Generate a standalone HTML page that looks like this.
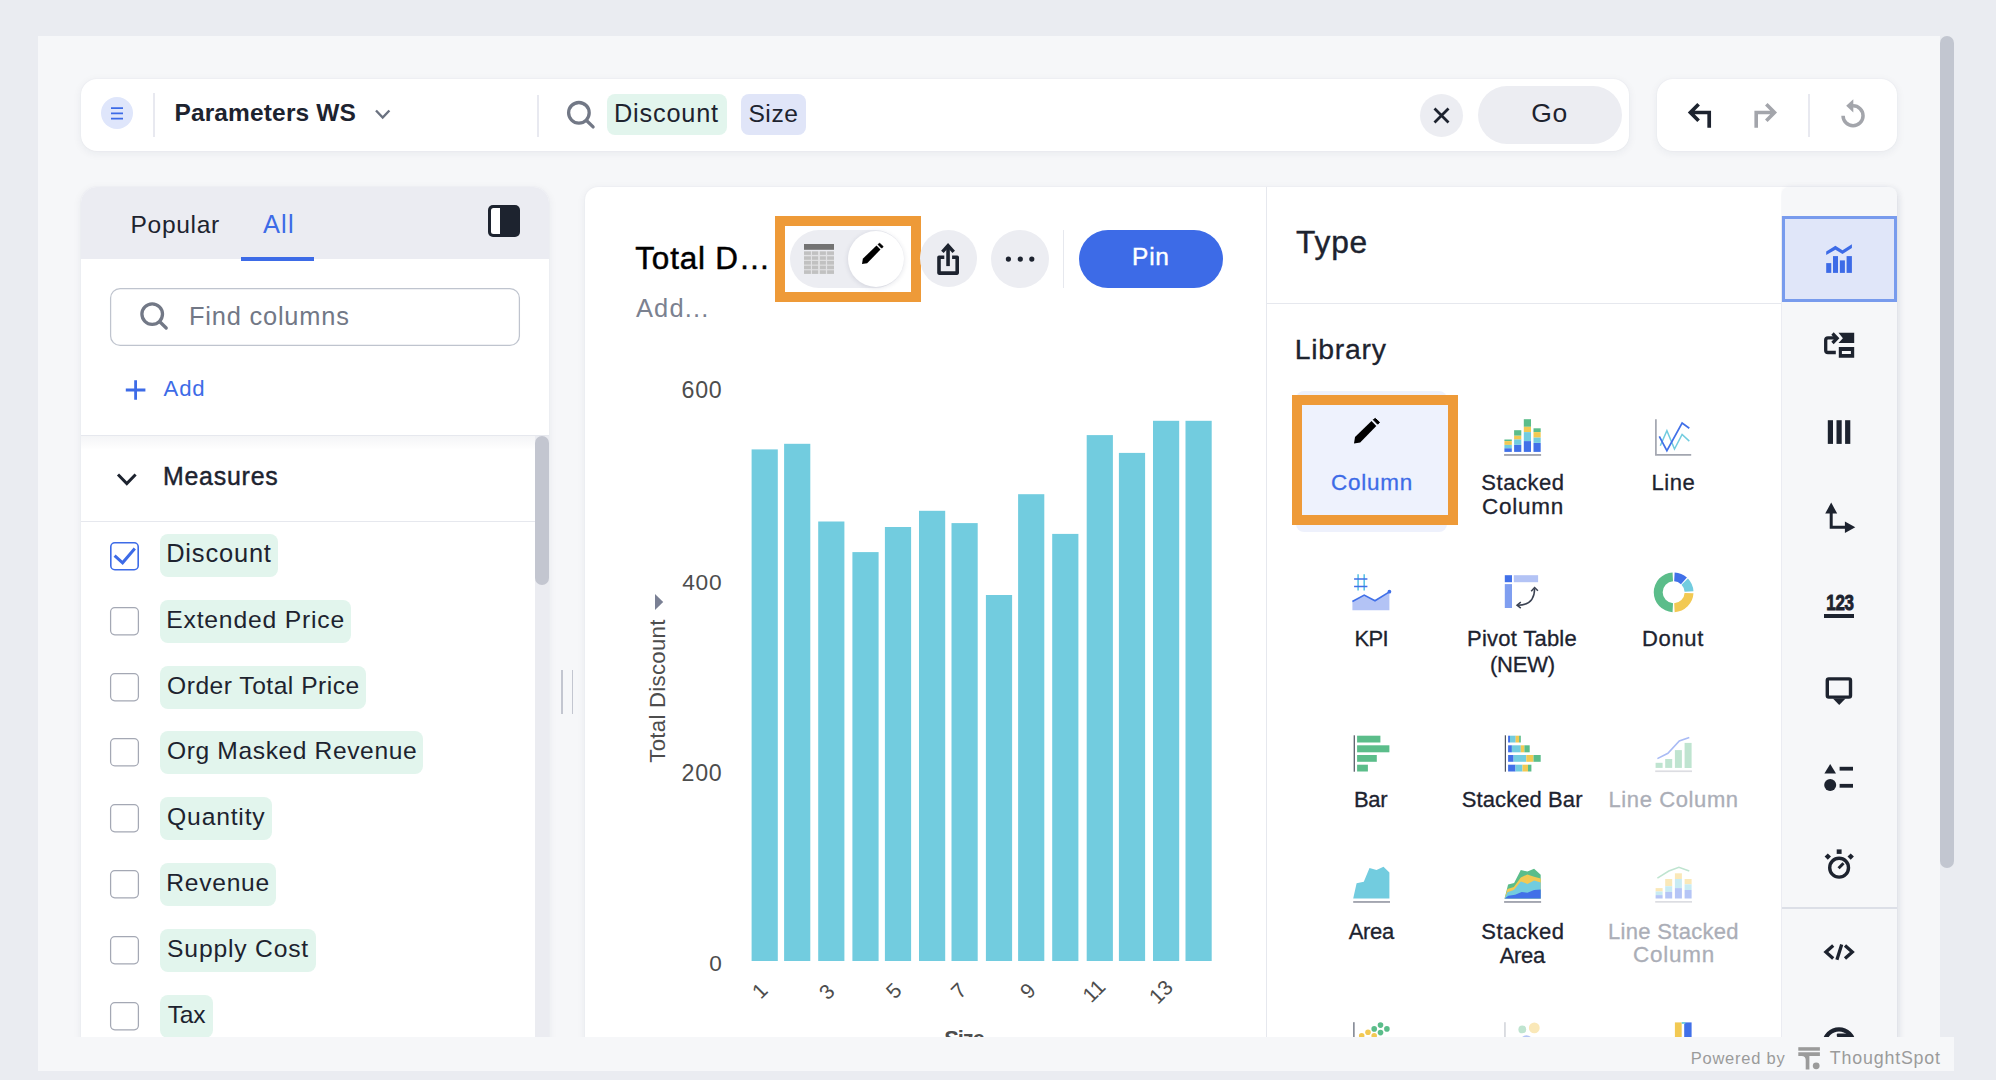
<!DOCTYPE html>
<html><head><meta charset="utf-8"><title>ThoughtSpot</title>
<style>
html,body{margin:0;padding:0}
html{width:2002px;height:1080px;overflow:hidden}
body{width:2002px;height:1080px;overflow:hidden;background:#eaecf1;position:relative;font-family:"Liberation Sans", sans-serif}
.b{position:absolute;box-sizing:border-box;display:block}
.t{position:absolute;white-space:nowrap;font-family:"Liberation Sans", sans-serif}
</style></head><body>
<div class="b" style="left:38px;top:36px;width:1902px;height:1035px;background:#f6f7f9;border-radius:0px;"></div>
<div class="b" style="left:1940px;top:36px;width:14px;height:832px;background:#c2c6d0;border-radius:7px;"></div>
<div class="b" style="left:81px;top:79px;width:1548px;height:72px;background:#fff;border-radius:16px;box-shadow:0 2px 10px rgba(30,40,80,.065),0 0 2px rgba(30,40,80,.05);"></div>
<div class="b" style="left:101px;top:97.4px;width:32px;height:32px;background:#dfe6fb;border-radius:16px;"></div>
<svg class="b" style="left:101px;top:97px;" width="32" height="32" viewBox="101 97 32 32"><path d="M111 108.2h12M111 113.4h12M111 118.6h12" stroke="#3d6be7" stroke-width="1.8" fill="none"/></svg>
<div class="b" style="left:153.3px;top:93px;width:1.8px;height:44px;background:#e8e9f0;border-radius:0px;"></div>
<div class="t" style="left:174.41px;top:101.01px;font-size:24.5px;line-height:24.5px;color:#1d232f;font-weight:700;letter-spacing:0.145px;">Parameters WS</div>
<svg class="b" style="left:370px;top:105px;" width="26" height="20" viewBox="370 105 26 20"><path d="M376 110.5l6.7 7 6.7-7" stroke="#6b7280" stroke-width="2.4" fill="none"/></svg>
<div class="b" style="left:536.8px;top:95px;width:1.8px;height:42px;background:#e8e9f0;border-radius:0px;"></div>
<svg class="b" style="left:560px;top:95px;" width="40" height="40" viewBox="560 95 40 40"><circle cx="578.9" cy="112.8" r="10.3" stroke="#727886" stroke-width="3.3" fill="none"/><path d="M586.5 120.5l6.6 6.4" stroke="#727886" stroke-width="3.3" stroke-linecap="round"/></svg>
<div class="b" style="left:607px;top:94px;width:120px;height:40.5px;background:#e2f5ed;border-radius:8px;"></div>
<div class="t" style="left:613.97px;top:101.07px;font-size:25.32px;line-height:25.32px;color:#1d232f;font-weight:400;letter-spacing:0.798px;">Discount</div>
<div class="b" style="left:741px;top:94px;width:65px;height:40.5px;background:#e0e5f8;border-radius:8px;"></div>
<div class="t" style="left:748.39px;top:101.68px;font-size:24.6px;line-height:24.6px;color:#1d232f;font-weight:400;letter-spacing:0.588px;">Size</div>
<div class="b" style="left:1420px;top:94px;width:43px;height:43px;background:#ecedf2;border-radius:22px;"></div>
<svg class="b" style="left:1425px;top:100px;" width="34" height="32" viewBox="1425 100 34 32"><path d="M1434.5 108.5l14 14M1448.5 108.5l-14 14" stroke="#1d232f" stroke-width="2.8" fill="none"/></svg>
<div class="b" style="left:1478px;top:86px;width:144px;height:58px;background:#ecedf2;border-radius:29px;"></div>
<div class="t" style="left:1531.18px;top:100.19px;font-size:26.47px;line-height:26.47px;color:#1d232f;font-weight:400;letter-spacing:0.802px;">Go</div>
<div class="b" style="left:1657px;top:79px;width:240px;height:72px;background:#fff;border-radius:16px;box-shadow:0 2px 10px rgba(30,40,80,.065),0 0 2px rgba(30,40,80,.05);"></div>
<svg class="b" style="left:1680px;top:98px;" width="40" height="36" viewBox="1680 98 40 36"><path d="M1698.6 104.2L1690.4 112.5L1698.6 120.8M1690.4 112.5H1709.2V127.7" stroke="#1d232f" stroke-width="3.7" fill="none"/></svg>
<svg class="b" style="left:1748px;top:98px;" width="40" height="36" viewBox="1748 98 40 36"><path d="M1766.3 104.2L1774.5 112.5L1766.3 120.8M1774.5 112.5H1756.2V127.7" stroke="#a3a5ab" stroke-width="3.6" fill="none"/></svg>
<div class="b" style="left:1808.2px;top:94px;width:1.7px;height:43px;background:#e8e9f0;border-radius:0px;"></div>
<svg class="b" style="left:1836px;top:94px;" width="36" height="38" viewBox="1836 94 36 38"><path d="M1853.05 105.75A10 10 0 1 1 1843.05 115.75" stroke="#a3a5ab" stroke-width="3.5" fill="none"/><path d="M1846.2 105.7L1853.3 99.2V112.4z" fill="#a3a5ab"/></svg>
<div class="b" style="left:81px;top:187px;width:468px;height:860px;background:#fff;border-radius:0px;border-radius:16px 16px 0 0;box-shadow:0 2px 10px rgba(30,40,80,.065),0 0 2px rgba(30,40,80,.05);"></div>
<div class="b" style="left:81px;top:187px;width:468px;height:72px;background:#ebecf2;border-radius:0px;border-radius:16px 16px 0 0;"></div>
<div class="t" style="left:130.53px;top:212.93px;font-size:24.6px;line-height:24.6px;color:#1d232f;font-weight:400;letter-spacing:0.666px;">Popular</div>
<div class="t" style="left:263.00px;top:212.20px;font-size:25.46px;line-height:25.46px;color:#3d6be7;font-weight:400;letter-spacing:1.144px;">All</div>
<div class="b" style="left:241px;top:257px;width:73px;height:4px;background:#3d6be7;border-radius:0px;"></div>
<div class="b" style="left:488px;top:205px;width:32px;height:32px;background:#1d232f;border-radius:5px;"></div>
<div class="b" style="left:491px;top:208px;width:9px;height:26px;background:#fff;border-radius:0px;border-radius:2.5px 0 0 2.5px;"></div>
<svg class="b" style="left:108px;top:286px;" width="414" height="62" viewBox="108 286 414 62"><rect x="110.6" y="288.6" width="408.8" height="56.8" rx="9.5" fill="#fff" stroke="#bfc4ce" stroke-width="1.25"/></svg>
<svg class="b" style="left:136px;top:298px;" width="36" height="36" viewBox="136 298 36 36"><circle cx="152.2" cy="314.1" r="10.3" stroke="#727886" stroke-width="3.3" fill="none"/><path d="M159.8 321.8l6.4 6.2" stroke="#727886" stroke-width="3.3" stroke-linecap="round"/></svg>
<div class="t" style="left:188.97px;top:304.49px;font-size:25.41px;line-height:25.41px;color:#727886;font-weight:400;letter-spacing:0.801px;">Find columns</div>
<svg class="b" style="left:124px;top:378px;" width="24" height="24" viewBox="124 378 24 24"><path d="M135.6 380.2v19.6M125.8 390h19.6" stroke="#3d6be7" stroke-width="2.8" fill="none"/></svg>
<div class="t" style="left:163.60px;top:377.55px;font-size:22.15px;line-height:22.15px;color:#3d6be7;font-weight:400;letter-spacing:0.822px;">Add</div>
<div class="b" style="left:81px;top:435px;width:468px;height:1.2px;background:#e6e8ee;border-radius:0px;"></div>
<div class="b" style="left:81px;top:436px;width:454px;height:14px;background:linear-gradient(rgba(40,50,90,.05),rgba(40,50,90,0));border-radius:0px;"></div>
<div class="b" style="left:535px;top:436px;width:14px;height:620px;background:#ebecf1;border-radius:0px;"></div>
<div class="b" style="left:535px;top:436px;width:14px;height:149px;background:#c3c6d0;border-radius:7px;"></div>
<svg class="b" style="left:112px;top:468px;" width="30" height="24" viewBox="112 468 30 24"><path d="M118 474.5l8.8 9 8.8-9" stroke="#1d232f" stroke-width="3" fill="none"/></svg>
<div class="t" style="left:162.91px;top:464.43px;font-size:24.89px;line-height:24.89px;color:#1d232f;font-weight:400;letter-spacing:0.797px;-webkit-text-stroke:.45px #1d232f;">Measures</div>
<div class="b" style="left:81px;top:521px;width:454px;height:1.2px;background:#e6e8ee;border-radius:0px;"></div>
<div class="b" style="left:160px;top:534.2px;width:118px;height:42.7px;background:#e2f5ed;border-radius:8px;"></div>
<div class="t" style="left:166.16px;top:541.45px;font-size:25.46px;line-height:25.46px;color:#1d232f;font-weight:400;letter-spacing:0.822px;">Discount</div>
<svg class="b" style="left:108px;top:539.5px;" width="33" height="33" viewBox="108 539.5 33 33"><rect x="110.8" y="542.3" width="27.4" height="26.9" rx="4" fill="#fff" stroke="#3d6be7" stroke-width="1.6"/></svg>
<svg class="b" style="left:110px;top:541.5px;" width="29" height="29" viewBox="110 541.5 29 29"><path d="M114.6 555.1l8 7.2 12.2-14.2" stroke="#3d6be7" stroke-width="3" fill="none"/></svg>
<div class="b" style="left:160px;top:600px;width:191px;height:42.7px;background:#e2f5ed;border-radius:8px;"></div>
<div class="t" style="left:166.22px;top:607.88px;font-size:24.71px;line-height:24.71px;color:#1d232f;font-weight:400;letter-spacing:0.801px;">Extended Price</div>
<svg class="b" style="left:108px;top:605.3px;" width="33" height="33" viewBox="108 605.3 33 33"><rect x="110.6" y="607.9" width="27.8" height="27.2" rx="4.2" fill="#fff" stroke="#a4a8b4" stroke-width="1.25"/></svg>
<div class="b" style="left:160px;top:666px;width:206px;height:42.7px;background:#e2f5ed;border-radius:8px;"></div>
<div class="t" style="left:167.09px;top:673.98px;font-size:24.6px;line-height:24.6px;color:#1d232f;font-weight:400;letter-spacing:0.504px;">Order Total Price</div>
<svg class="b" style="left:108px;top:671.3px;" width="33" height="33" viewBox="108 671.3 33 33"><rect x="110.6" y="673.9" width="27.8" height="27.2" rx="4.2" fill="#fff" stroke="#a4a8b4" stroke-width="1.25"/></svg>
<div class="b" style="left:160px;top:731px;width:263px;height:42.7px;background:#e2f5ed;border-radius:8px;"></div>
<div class="t" style="left:167.09px;top:738.98px;font-size:24.6px;line-height:24.6px;color:#1d232f;font-weight:400;letter-spacing:0.608px;">Org Masked Revenue</div>
<svg class="b" style="left:108px;top:736.3px;" width="33" height="33" viewBox="108 736.3 33 33"><rect x="110.6" y="738.9" width="27.8" height="27.2" rx="4.2" fill="#fff" stroke="#a4a8b4" stroke-width="1.25"/></svg>
<div class="b" style="left:160px;top:797px;width:112px;height:42.7px;background:#e2f5ed;border-radius:8px;"></div>
<div class="t" style="left:167.09px;top:804.88px;font-size:24.71px;line-height:24.71px;color:#1d232f;font-weight:400;letter-spacing:0.798px;">Quantity</div>
<svg class="b" style="left:108px;top:802.3px;" width="33" height="33" viewBox="108 802.3 33 33"><rect x="110.6" y="804.9" width="27.8" height="27.2" rx="4.2" fill="#fff" stroke="#a4a8b4" stroke-width="1.25"/></svg>
<div class="b" style="left:160px;top:863px;width:116px;height:42.7px;background:#e2f5ed;border-radius:8px;"></div>
<div class="t" style="left:166.23px;top:870.98px;font-size:24.6px;line-height:24.6px;color:#1d232f;font-weight:400;letter-spacing:0.751px;">Revenue</div>
<svg class="b" style="left:108px;top:868.3px;" width="33" height="33" viewBox="108 868.3 33 33"><rect x="110.6" y="870.9" width="27.8" height="27.2" rx="4.2" fill="#fff" stroke="#a4a8b4" stroke-width="1.25"/></svg>
<div class="b" style="left:160px;top:929px;width:156px;height:42.7px;background:#e2f5ed;border-radius:8px;"></div>
<div class="t" style="left:167.09px;top:936.89px;font-size:24.7px;line-height:24.7px;color:#1d232f;font-weight:400;letter-spacing:0.801px;">Supply Cost</div>
<svg class="b" style="left:108px;top:934.3px;" width="33" height="33" viewBox="108 934.3 33 33"><rect x="110.6" y="936.9" width="27.8" height="27.2" rx="4.2" fill="#fff" stroke="#a4a8b4" stroke-width="1.25"/></svg>
<div class="b" style="left:160px;top:995px;width:53px;height:42.7px;background:#e2f5ed;border-radius:8px;"></div>
<div class="t" style="left:167.71px;top:1002.98px;font-size:24.6px;line-height:24.6px;color:#1d232f;font-weight:400;letter-spacing:-0.272px;">Tax</div>
<svg class="b" style="left:108px;top:1000.3px;" width="33" height="33" viewBox="108 1000.3 33 33"><rect x="110.6" y="1002.9" width="27.8" height="27.2" rx="4.2" fill="#fff" stroke="#a4a8b4" stroke-width="1.25"/></svg>
<div class="b" style="left:561px;top:670px;width:1.6px;height:44px;background:#c3c6d0;border-radius:0px;"></div>
<div class="b" style="left:571.5px;top:670px;width:1.6px;height:44px;background:#c3c6d0;border-radius:0px;"></div>
<div class="b" style="left:585px;top:187px;width:1312px;height:860px;background:#fff;border-radius:0px;border-radius:13px 13px 0 0;box-shadow:0 2px 10px rgba(30,40,80,.065),0 0 2px rgba(30,40,80,.05);"></div>
<div class="t" style="left:635.37px;top:242.89px;font-size:31.44px;line-height:31.44px;color:#000;font-weight:400;letter-spacing:0.797px;-webkit-text-stroke:.5px #000;">Total D…</div>
<div class="t" style="left:636.00px;top:295.95px;font-size:25.46px;line-height:25.46px;color:#7b8190;font-weight:400;letter-spacing:1.143px;">Add...</div>
<div class="b" style="left:775px;top:216px;width:146px;height:86px;background:transparent;border-radius:0px;border:10px solid #ee9a38;"></div>
<div class="b" style="left:790px;top:230px;width:114px;height:58px;background:#ecedf2;border-radius:29px;"></div>
<div class="b" style="left:847.8px;top:230.8px;width:56.4px;height:56.4px;background:#fff;border-radius:29px;box-shadow:0 1px 5px rgba(30,40,80,.13);"></div>
<svg class="b" style="left:800px;top:240px;" width="40" height="40" viewBox="800 240 40 40"><rect x="804" y="244" width="30" height="5.8" fill="#737373"/><rect x="804" y="251.2" width="30" height="22.7" fill="#e2e2e4"/><rect x="804" y="251.4" width="6.9" height="3.5" fill="#c1c1c1"/><rect x="812" y="251.4" width="6.1" height="3.5" fill="#c1c1c1"/><rect x="819.9" y="251.4" width="6.0" height="3.5" fill="#c1c1c1"/><rect x="827.1" y="251.4" width="6.9" height="3.5" fill="#c1c1c1"/><rect x="804" y="256.3" width="6.9" height="3.5" fill="#c1c1c1"/><rect x="812" y="256.3" width="6.1" height="3.5" fill="#c1c1c1"/><rect x="819.9" y="256.3" width="6.0" height="3.5" fill="#c1c1c1"/><rect x="827.1" y="256.3" width="6.9" height="3.5" fill="#c1c1c1"/><rect x="804" y="260.9" width="6.9" height="3.7" fill="#c1c1c1"/><rect x="812" y="260.9" width="6.1" height="3.7" fill="#c1c1c1"/><rect x="819.9" y="260.9" width="6.0" height="3.7" fill="#c1c1c1"/><rect x="827.1" y="260.9" width="6.9" height="3.7" fill="#c1c1c1"/><rect x="804" y="265.7" width="6.9" height="3.5" fill="#c1c1c1"/><rect x="812" y="265.7" width="6.1" height="3.5" fill="#c1c1c1"/><rect x="819.9" y="265.7" width="6.0" height="3.5" fill="#c1c1c1"/><rect x="827.1" y="265.7" width="6.9" height="3.5" fill="#c1c1c1"/><rect x="804" y="270.3" width="6.9" height="3.6" fill="#c1c1c1"/><rect x="812" y="270.3" width="6.1" height="3.6" fill="#c1c1c1"/><rect x="819.9" y="270.3" width="6.0" height="3.6" fill="#c1c1c1"/><rect x="827.1" y="270.3" width="6.9" height="3.6" fill="#c1c1c1"/></svg>
<svg class="b" style="left:859.5px;top:240.8px" width="25.6" height="25.2" viewBox="859.5 240.8 25.6 25.2"><path d="M861.50 263.88L862.33 258.57L876.02 245.21L880.01 249.36L866.65 263.05Z" fill="#000"/><path d="M877.52 244.21L879.18 243.13L882.66 246.37L881.17 247.95Z" fill="#000" stroke="#000" stroke-width="0.83" stroke-linejoin="round"/></svg>
<div class="b" style="left:920px;top:230px;width:57px;height:57px;background:#ecedf2;border-radius:29px;"></div>
<svg class="b" style="left:930px;top:238px;" width="40" height="42" viewBox="930 238 40 42"><path d="M944.3 257.2H939V273.1H957.2V257.2H952.1" stroke="#1d232f" stroke-width="3.6" fill="none" stroke-linejoin="round"/><path d="M948.05 246V266.1" stroke="#1d232f" stroke-width="3.6"/><path d="M942.4 251.9L948.05 245.6L953.7 251.9" stroke="#1d232f" stroke-width="3.4" fill="none"/></svg>
<div class="b" style="left:991px;top:230px;width:58px;height:58px;background:#ecedf2;border-radius:29px;"></div>
<svg class="b" style="left:1000px;top:250px;" width="40" height="20" viewBox="1000 250 40 20"><circle cx="1008.4" cy="259.1" r="2.6" fill="#1d232f"/><circle cx="1020.3" cy="259.1" r="2.6" fill="#1d232f"/><circle cx="1031.8" cy="259.1" r="2.6" fill="#1d232f"/></svg>
<div class="b" style="left:1063px;top:230px;width:1.2px;height:58px;background:#e6e8ee;border-radius:0px;"></div>
<div class="b" style="left:1079px;top:230px;width:144px;height:58px;background:#3d6be7;border-radius:29px;"></div>
<div class="t" style="left:1132.04px;top:245.04px;font-size:24.46px;line-height:24.46px;color:#fff;font-weight:400;letter-spacing:0.800px;-webkit-text-stroke:.4px #fff;">Pin</div>
<div class="t" style="left:681.44px;top:378.67px;font-size:23.19px;line-height:23.19px;color:#4d4d4d;font-weight:400;letter-spacing:0.803px;">600</div>
<div class="t" style="left:682.14px;top:570.53px;font-size:22.76px;line-height:22.76px;color:#4d4d4d;font-weight:400;letter-spacing:0.802px;">400</div>
<div class="t" style="left:681.44px;top:761.67px;font-size:23.19px;line-height:23.19px;color:#4d4d4d;font-weight:400;letter-spacing:0.803px;">200</div>
<div class="t" style="left:709.15px;top:953.37px;font-size:22.6px;line-height:22.6px;color:#4d4d4d;font-weight:400;letter-spacing:0.000px;">0</div>
<svg class="b" style="left:740px;top:400px;" width="490" height="570" viewBox="740 400 490 570"><rect x="751.6" y="449.4" width="26.2" height="511.6" fill="#72ccdf"/><rect x="784.1" y="443.8" width="26.2" height="517.2" fill="#72ccdf"/><rect x="818.2" y="521.5" width="26.2" height="439.5" fill="#72ccdf"/><rect x="852.4" y="552.1" width="26.2" height="408.9" fill="#72ccdf"/><rect x="884.9" y="527.0" width="26.2" height="434.0" fill="#72ccdf"/><rect x="919.0" y="510.8" width="26.2" height="450.2" fill="#72ccdf"/><rect x="951.5" y="523.1" width="26.2" height="437.9" fill="#72ccdf"/><rect x="985.9" y="595.0" width="26.2" height="366.0" fill="#72ccdf"/><rect x="1018.1" y="494.2" width="26.2" height="466.8" fill="#72ccdf"/><rect x="1052.2" y="533.9" width="26.2" height="427.1" fill="#72ccdf"/><rect x="1086.7" y="435.1" width="26.2" height="525.9" fill="#72ccdf"/><rect x="1118.9" y="452.9" width="26.2" height="508.1" fill="#72ccdf"/><rect x="1153.0" y="420.8" width="26.2" height="540.2" fill="#72ccdf"/><rect x="1185.5" y="420.8" width="26.2" height="540.2" fill="#72ccdf"/></svg>
<div class="t" style="left:657.6px;top:690.9px;font-size:22.2px;line-height:22.2px;color:#4d4d4d;transform:translate(-50%,-50%) rotate(-90deg);letter-spacing:0.283px;margin-top:0.14px">Total Discount</div>
<svg class="b" style="left:650px;top:590px;" width="18" height="24" viewBox="650 590 18 24"><path d="M655 594l8.2 8-8.2 8z" fill="#7a8094"/></svg>
<div class="t" style="left:760.3px;top:991px;font-size:21px;line-height:22px;color:#4d4d4d;transform:translate(-50%,-50%) rotate(-45deg)">1</div>
<div class="t" style="left:826.8px;top:991.5px;font-size:21px;line-height:22px;color:#4d4d4d;transform:translate(-50%,-50%) rotate(-45deg)">3</div>
<div class="t" style="left:893.7px;top:991px;font-size:21px;line-height:22px;color:#4d4d4d;transform:translate(-50%,-50%) rotate(-45deg)">5</div>
<div class="t" style="left:959.3px;top:991px;font-size:21px;line-height:22px;color:#4d4d4d;transform:translate(-50%,-50%) rotate(-45deg)">7</div>
<div class="t" style="left:1027.5px;top:991px;font-size:21px;line-height:22px;color:#4d4d4d;transform:translate(-50%,-50%) rotate(-45deg)">9</div>
<div class="t" style="left:1094px;top:991px;font-size:21px;line-height:22px;color:#4d4d4d;transform:translate(-50%,-50%) rotate(-45deg)">11</div>
<div class="t" style="left:1160.6px;top:992px;font-size:21px;line-height:22px;color:#4d4d4d;transform:translate(-50%,-50%) rotate(-45deg)">13</div>
<div class="t" style="left:944.15px;top:1027.98px;font-size:22px;line-height:22px;color:#4d4d4d;font-weight:700;letter-spacing:-1.062px;">Size</div>
<div class="b" style="left:1266px;top:187px;width:1.2px;height:860px;background:#e6e8ee;border-radius:0px;"></div>
<div class="b" style="left:1267px;top:302.5px;width:514px;height:1.2px;background:#e6e8ee;border-radius:0px;"></div>
<div class="t" style="left:1296.12px;top:227.41px;font-size:31.71px;line-height:31.71px;color:#1d232f;font-weight:400;letter-spacing:0.798px;-webkit-text-stroke:.4px #1d232f;">Type</div>
<div class="t" style="left:1294.73px;top:334.71px;font-size:28.4px;line-height:28.4px;color:#1d232f;font-weight:400;letter-spacing:0.744px;-webkit-text-stroke:.3px #1d232f;">Library</div>
<div class="b" style="left:1296px;top:391px;width:151px;height:141px;background:#eef1fc;border-radius:8px;"></div>
<div class="b" style="left:1292px;top:395px;width:166px;height:130px;background:#eef2fd;border-radius:0px;border:10px solid #ee9a38;"></div>
<svg class="b" style="left:1352.2px;top:416.4px" width="30.0" height="29.5" viewBox="1352.2 416.4 30.0 29.5"><path d="M1354.20 443.80L1355.20 437.40L1371.70 421.30L1376.50 426.30L1360.40 442.80Z" fill="#000"/><path d="M1373.50 420.10L1375.50 418.80L1379.70 422.70L1377.90 424.60Z" fill="#000" stroke="#000" stroke-width="1.00" stroke-linejoin="round"/></svg>
<div class="t" style="left:1330.93px;top:472.09px;font-size:22.46px;line-height:22.46px;color:#3d6be7;font-weight:400;letter-spacing:0.801px;-webkit-text-stroke:.3px #3d6be7;">Column</div>
<div class="t" style="left:1481.26px;top:472.48px;font-size:22px;line-height:22px;color:#1d232f;font-weight:400;letter-spacing:0.557px;-webkit-text-stroke:.3px #1d232f;">Stacked</div>
<div class="t" style="left:1481.93px;top:495.89px;font-size:22.46px;line-height:22.46px;color:#1d232f;font-weight:400;letter-spacing:0.801px;-webkit-text-stroke:.3px #1d232f;">Column</div>
<div class="t" style="left:1651.49px;top:472.48px;font-size:22px;line-height:22px;color:#1d232f;font-weight:400;letter-spacing:0.524px;-webkit-text-stroke:.3px #1d232f;">Line</div>
<div class="t" style="left:1354.49px;top:628.08px;font-size:22px;line-height:22px;color:#1d232f;font-weight:400;letter-spacing:-0.634px;-webkit-text-stroke:.3px #1d232f;">KPI</div>
<div class="t" style="left:1466.99px;top:628.08px;font-size:22px;line-height:22px;color:#1d232f;font-weight:400;letter-spacing:0.255px;-webkit-text-stroke:.3px #1d232f;">Pivot Table</div>
<div class="t" style="left:1489.93px;top:653.58px;font-size:22px;line-height:22px;color:#1d232f;font-weight:400;letter-spacing:-0.221px;-webkit-text-stroke:.3px #1d232f;">(NEW)</div>
<div class="t" style="left:1641.99px;top:628.08px;font-size:22px;line-height:22px;color:#1d232f;font-weight:400;letter-spacing:0.654px;-webkit-text-stroke:.3px #1d232f;">Donut</div>
<div class="t" style="left:1353.99px;top:788.68px;font-size:22px;line-height:22px;color:#1d232f;font-weight:400;letter-spacing:-0.345px;-webkit-text-stroke:.3px #1d232f;">Bar</div>
<div class="t" style="left:1461.76px;top:788.68px;font-size:22px;line-height:22px;color:#1d232f;font-weight:400;letter-spacing:0.094px;-webkit-text-stroke:.3px #1d232f;">Stacked Bar</div>
<div class="t" style="left:1608.49px;top:788.68px;font-size:22px;line-height:22px;color:#abaeb7;font-weight:400;letter-spacing:0.609px;-webkit-text-stroke:.3px #abaeb7;">Line Column</div>
<div class="t" style="left:1348.75px;top:920.88px;font-size:22px;line-height:22px;color:#1d232f;font-weight:400;letter-spacing:-0.352px;-webkit-text-stroke:.3px #1d232f;">Area</div>
<div class="t" style="left:1481.26px;top:920.88px;font-size:22px;line-height:22px;color:#1d232f;font-weight:400;letter-spacing:0.557px;-webkit-text-stroke:.3px #1d232f;">Stacked</div>
<div class="t" style="left:1499.75px;top:944.88px;font-size:22px;line-height:22px;color:#1d232f;font-weight:400;letter-spacing:-0.352px;-webkit-text-stroke:.3px #1d232f;">Area</div>
<div class="t" style="left:1607.99px;top:920.88px;font-size:22px;line-height:22px;color:#abaeb7;font-weight:400;letter-spacing:0.310px;-webkit-text-stroke:.3px #abaeb7;">Line Stacked</div>
<div class="t" style="left:1632.93px;top:944.49px;font-size:22.46px;line-height:22.46px;color:#abaeb7;font-weight:400;letter-spacing:0.801px;-webkit-text-stroke:.3px #abaeb7;">Column</div>
<svg class="b" style="left:1500px;top:415px;" width="46" height="46" viewBox="1500 415 46 46"><rect x="1504.4" y="439.5" width="7.4" height="1.5" fill="#5bbd8a"/><rect x="1504.4" y="441.1" width="7.4" height="3.8" fill="#f2c953"/><rect x="1504.4" y="444.9" width="7.4" height="3.4" fill="#72ccdf"/><rect x="1504.4" y="448.3" width="7.4" height="3.6" fill="#4170e8"/><rect x="1514.1" y="430.2" width="7.2" height="5.5" fill="#5bbd8a"/><rect x="1514.1" y="435.8" width="7.2" height="3.8" fill="#f2c953"/><rect x="1514.1" y="439.5" width="7.2" height="5.3" fill="#72ccdf"/><rect x="1514.1" y="444.9" width="7.2" height="7.0" fill="#4170e8"/><rect x="1523.8" y="419.2" width="7.2" height="7.6" fill="#5bbd8a"/><rect x="1523.8" y="426.8" width="7.2" height="5.3" fill="#f2c953"/><rect x="1523.8" y="432.1" width="7.2" height="8.9" fill="#72ccdf"/><rect x="1523.8" y="441.1" width="7.2" height="10.8" fill="#4170e8"/><rect x="1533.5" y="428.3" width="7.2" height="3.8" fill="#5bbd8a"/><rect x="1533.5" y="432.1" width="7.2" height="5.5" fill="#f2c953"/><rect x="1533.5" y="437.6" width="7.2" height="5.3" fill="#72ccdf"/><rect x="1533.5" y="443.0" width="7.2" height="8.9" fill="#4170e8"/><rect x="1504.1" y="454.0" width="37.0" height="1.9" fill="#a3a6b0"/></svg>
<svg class="b" style="left:1650px;top:415px;" width="46" height="46" viewBox="1650 415 46 46"><polyline points="1655.9,419.2 1655.9,454.9 1691.2,454.9" stroke="#a3a6b0" stroke-width="1.7" fill="none"/><polyline points="1660.3,445.8 1666.9,430.6 1674.5,449.0 1682.1,434.4 1689.3,441.1" stroke="#72ccdf" stroke-width="1.5" fill="none"/><polyline points="1659.3,436.3 1666.9,450.6 1682.1,423.0 1689.3,428.3" stroke="#4170e8" stroke-width="1.7" fill="none"/></svg>
<svg class="b" style="left:1348px;top:570px;" width="48" height="46" viewBox="1348 570 48 46"><polygon points="1352.4,601.4 1364.2,595.1 1375.0,600.8 1389.4,591.9 1389.4,610.3 1352.4,610.3" fill="#b3c3f5"/><polyline points="1352.4,601.4 1364.2,595.1 1375.0,600.8 1389.4,591.9" stroke="#4170e8" stroke-width="1.7" fill="none"/><circle cx="1389.4" cy="591.7" r="1.9" fill="#4170e8"/><path d="M1358.1 574.2V590.4M1364.2 574.2V590.4" stroke="#5cc4e6" stroke-width="1.6"/><path d="M1354.1 579.0H1367.4M1354.1 586.6H1367.4" stroke="#4170e8" stroke-width="1.5"/></svg>
<svg class="b" style="left:1500px;top:570px;" width="46" height="46" viewBox="1500 570 46 46"><rect x="1504.8" y="575.2" width="7.2" height="7.0" fill="#4170e8"/><rect x="1513.8" y="575.2" width="24.3" height="7.0" fill="#b3c3f5"/><rect x="1504.8" y="584.1" width="7.2" height="23.9" fill="#7f9ef0"/><path d="M1517.9 605.2Q1534.6 605.2 1534.6 588.5" stroke="#3b4252" stroke-width="1.5" fill="none"/><polyline points="1520.8,602.1 1517.0,605.2 1520.8,608.2" stroke="#3b4252" stroke-width="1.5" fill="none"/><polyline points="1531.2,591.3 1534.6,587.5 1537.9,590.8" stroke="#3b4252" stroke-width="1.5" fill="none"/></svg>
<svg class="b" style="left:1650px;top:570px;" width="46" height="46" viewBox="1650 570 46 46"><path d="M1672.56 612.17A19.9 19.9 0 0 1 1672.56 572.43L1673.02 581.32A11 11 0 0 0 1673.02 603.28Z" fill="#5bbd8a"/><path d="M1674.64 572.43A19.9 19.9 0 0 1 1686.92 577.51L1680.96 584.13A11 11 0 0 0 1674.18 581.32Z" fill="#4170e8"/><path d="M1687.91 578.48A19.9 19.9 0 0 1 1693.47 591.26L1684.58 591.72A11 11 0 0 0 1681.51 584.66Z" fill="#72ccdf"/><path d="M1693.47 593.34A19.9 19.9 0 0 1 1674.64 612.17L1674.18 603.28A11 11 0 0 0 1684.58 592.88Z" fill="#f2c953"/></svg>
<svg class="b" style="left:1350px;top:730px;" width="44" height="46" viewBox="1350 730 44 46"><rect x="1353.7" y="735.3" width="1.1" height="36.4" fill="#3b4252"/><rect x="1357.1" y="735.7" width="23.3" height="6.8" fill="#5bbd8a"/><rect x="1357.1" y="745.3" width="32.3" height="7.0" fill="#5bbd8a"/><rect x="1357.1" y="755.0" width="19.7" height="6.8" fill="#5bbd8a"/><rect x="1357.1" y="764.7" width="10.8" height="6.8" fill="#5bbd8a"/></svg>
<svg class="b" style="left:1500px;top:730px;" width="46" height="46" viewBox="1500 730 46 46"><rect x="1504.8" y="735.3" width="1.1" height="36.4" fill="#3b4252"/><rect x="1508.1" y="735.7" width="1.9" height="6.8" fill="#4170e8"/><rect x="1510.0" y="735.7" width="5.7" height="6.8" fill="#72ccdf"/><rect x="1515.6" y="735.7" width="3.4" height="6.8" fill="#f2c953"/><rect x="1519.1" y="735.7" width="1.7" height="6.8" fill="#5bbd8a"/><rect x="1508.1" y="745.3" width="3.8" height="7.0" fill="#4170e8"/><rect x="1511.9" y="745.3" width="8.9" height="7.0" fill="#72ccdf"/><rect x="1520.8" y="745.3" width="3.6" height="7.0" fill="#f2c953"/><rect x="1524.4" y="745.3" width="5.3" height="7.0" fill="#5bbd8a"/><rect x="1508.1" y="755.0" width="5.5" height="6.8" fill="#4170e8"/><rect x="1513.6" y="755.0" width="12.7" height="6.8" fill="#72ccdf"/><rect x="1526.3" y="755.0" width="7.2" height="6.8" fill="#f2c953"/><rect x="1533.5" y="755.0" width="7.2" height="6.8" fill="#5bbd8a"/><rect x="1508.1" y="764.7" width="7.4" height="6.8" fill="#4170e8"/><rect x="1515.5" y="764.7" width="7.0" height="6.8" fill="#72ccdf"/><rect x="1522.5" y="764.7" width="5.5" height="6.8" fill="#f2c953"/><rect x="1528.0" y="764.7" width="3.4" height="6.8" fill="#5bbd8a"/></svg>
<svg class="b" style="left:1650px;top:730px;" width="46" height="46" viewBox="1650 730 46 46"><rect x="1655.6" y="762.8" width="7.0" height="5.1" fill="#bfe4d0"/><rect x="1665.2" y="759.0" width="7.0" height="8.9" fill="#bfe4d0"/><rect x="1674.9" y="750.1" width="7.0" height="17.8" fill="#bfe4d0"/><rect x="1684.6" y="742.9" width="7.0" height="25.1" fill="#bfe4d0"/><rect x="1655.2" y="770.4" width="36.8" height="1.7" fill="#dcdde2"/><polyline points="1657.4,758.6 1667.9,753.3 1679.3,741.0 1689.3,737.6" stroke="#a9bbf5" stroke-width="1.6" fill="none"/></svg>
<svg class="b" style="left:1350px;top:860px;" width="44" height="46" viewBox="1350 860 44 46"><polygon points="1353.2,898.5 1356.6,883.3 1363.8,881.8 1369.5,868.1 1376.5,870.0 1383.5,866.8 1389.4,872.5 1389.4,898.5" fill="#72ccdf"/><rect x="1353.2" y="901.0" width="36.8" height="1.9" fill="#a3a6b0"/></svg>
<svg class="b" style="left:1500px;top:860px;" width="46" height="46" viewBox="1500 860 46 46"><polygon points="1504.6,898.5 1508.1,884.6 1514.1,882.9 1520.8,870.0 1527.4,871.6 1534.1,868.7 1540.7,874.8 1540.7,898.5" fill="#5bbd8a"/><polygon points="1504.6,898.5 1507.5,889.0 1513.8,887.1 1520.8,877.6 1527.4,874.4 1534.1,876.7 1540.7,878.6 1540.7,898.5" fill="#f2c953"/><polygon points="1504.6,898.5 1507.5,892.2 1513.8,890.0 1520.8,881.4 1527.4,883.9 1534.1,880.5 1540.7,882.4 1540.7,898.5" fill="#72ccdf"/><polygon points="1504.6,898.5 1508.4,895.7 1515.1,894.7 1521.7,891.9 1527.4,892.8 1534.1,890.0 1540.7,889.4 1540.7,898.5" fill="#4170e8"/><rect x="1504.1" y="901.0" width="37.0" height="1.9" fill="#a3a6b0"/></svg>
<svg class="b" style="left:1650px;top:860px;" width="46" height="46" viewBox="1650 860 46 46"><rect x="1655.6" y="888.1" width="7.0" height="3.4" fill="#fae8b8"/><rect x="1655.6" y="891.5" width="7.0" height="3.6" fill="#c8ebf3"/><rect x="1655.6" y="895.1" width="7.0" height="3.4" fill="#b5c5f6"/><rect x="1665.2" y="879.0" width="7.0" height="7.2" fill="#fae8b8"/><rect x="1665.2" y="886.2" width="7.0" height="5.7" fill="#c8ebf3"/><rect x="1665.2" y="891.9" width="7.0" height="6.6" fill="#b5c5f6"/><rect x="1674.9" y="873.3" width="7.0" height="5.7" fill="#fae8b8"/><rect x="1674.9" y="879.0" width="7.0" height="9.1" fill="#c8ebf3"/><rect x="1674.9" y="888.1" width="7.0" height="10.4" fill="#b5c5f6"/><rect x="1684.6" y="879.0" width="7.0" height="5.3" fill="#fae8b8"/><rect x="1684.6" y="884.3" width="7.0" height="5.7" fill="#c8ebf3"/><rect x="1684.6" y="890.0" width="7.0" height="8.5" fill="#b5c5f6"/><rect x="1655.2" y="901.0" width="36.8" height="1.7" fill="#dcdde2"/><polyline points="1657.4,878.2 1668.8,871.0 1678.9,867.2 1689.3,871.0" stroke="#bfe4d0" stroke-width="1.5" fill="none"/></svg>
<svg class="b" style="left:1350px;top:1018px;" width="44" height="40" viewBox="1350 1018 44 40"><rect x="1353.0" y="1022.2" width="1.7" height="34.7" fill="#8a8f9a"/><circle cx="1380.5" cy="1025.1" r="2.8" fill="#5bbd8a"/><circle cx="1374.2" cy="1028.9" r="2.8" fill="#5bbd8a"/><circle cx="1386.9" cy="1028.9" r="2.8" fill="#5bbd8a"/><circle cx="1380.5" cy="1032.6" r="2.8" fill="#5bbd8a"/><circle cx="1368.0" cy="1032.3" r="2.8" fill="#f2c953"/><circle cx="1361.7" cy="1035.7" r="2.8" fill="#f2c953"/><circle cx="1374.2" cy="1035.7" r="2.8" fill="#f2c953"/></svg>
<svg class="b" style="left:1500px;top:1018px;" width="46" height="40" viewBox="1500 1018 46 40"><rect x="1504.3" y="1022.2" width="1.3" height="34.7" fill="#c9ccd3"/><circle cx="1522.3" cy="1029.4" r="3.9" fill="#bfe4d0"/><circle cx="1534.3" cy="1027.9" r="5.4" fill="#fae8b8"/><circle cx="1526.5" cy="1040.8" r="5.6" fill="#b5c5f6"/></svg>
<svg class="b" style="left:1650px;top:1018px;" width="46" height="40" viewBox="1650 1018 46 40"><rect x="1674.9" y="1022.4" width="6.8" height="34.5" fill="#f2c953"/><rect x="1684.2" y="1022.4" width="7.4" height="34.5" fill="#4170e8"/><rect x="1681.7" y="1022.0" width="3.6" height="1.9" fill="#72ccdf"/></svg>
<div class="b" style="left:1781.3px;top:187px;width:116px;height:860px;background:#f6f7f9;border-radius:0px;border-radius:8px 8px 0 0;box-shadow:2px 1px 7px rgba(30,40,80,.07);clip-path:inset(-10px -14px 0 0);"></div>
<div class="b" style="left:1781px;top:215.6px;width:1.1px;height:822px;background:#ebecf2;border-radius:0px;"></div>
<div class="b" style="left:1782px;top:216px;width:115.2px;height:85.8px;background:#e0e6f9;border-radius:0px;border:3px solid #789bed;"></div>
<svg class="b" style="left:1820px;top:238px;" width="40" height="40" viewBox="1820 238 40 40"><rect x="1826.2" y="263.1" width="5.05" height="9.8" fill="#3d6be7"/><rect x="1833" y="256.1" width="5.00" height="16.8" fill="#3d6be7"/><rect x="1839.9" y="260.4" width="5.00" height="12.5" fill="#3d6be7"/><rect x="1846.6" y="256.1" width="5.30" height="16.8" fill="#3d6be7"/><path d="M1826.2 251.4L1835.4 245.7L1842.5 250.2L1851.9 244.3V248.1L1842.5 254L1835.4 249.75L1826.2 255z" fill="#3d6be7"/></svg>
<svg class="b" style="left:1820px;top:328px;" width="40" height="34" viewBox="1820 328 40 34"><path d="M1838.5 332.75H1854.2V343.05H1838.5L1842.9 338.25z" fill="#1d232f"/><path d="M1838.8 347h15.4v10.8h-15.4zM1841.9 351v3.1h9v-3.1z" fill="#1d232f" fill-rule="evenodd"/><path d="M1835.8 352.5H1828Q1825.7 352.5 1825.7 350.2V340.1Q1825.7 337.8 1828 337.8H1836.5" stroke="#1d232f" stroke-width="3.3" fill="none"/><path d="M1832.5 333.5L1837.1 338.25L1832.5 343" stroke="#1d232f" stroke-width="3.3" fill="none"/></svg>
<svg class="b" style="left:1822px;top:416px;" width="34" height="32" viewBox="1822 416 34 32"><rect x="1827.8" y="420.2" width="5.2" height="23.7" fill="#1d232f"/><rect x="1836.5" y="420.2" width="5.2" height="23.7" fill="#1d232f"/><rect x="1845.1" y="420.2" width="5.2" height="23.7" fill="#1d232f"/></svg>
<svg class="b" style="left:1820px;top:498px;" width="40" height="40" viewBox="1820 498 40 40"><path d="M1831.2 512v15.2h15" stroke="#1d232f" stroke-width="3" fill="none"/><path d="M1831.2 502.6l6 11h-12zM1855.3 527.2l-10.4 5.7v-11.4z" fill="#1d232f"/></svg>
<div class="t" style="left:1839.6px;top:591.3px;font-size:22px;line-height:23px;font-weight:700;color:#1d232f;transform:translateX(-50%) scaleX(.77);letter-spacing:-.4px;-webkit-text-stroke:.9px #1d232f">123</div>
<div class="b" style="left:1824px;top:613.9px;width:30px;height:3.7px;background:#1d232f;border-radius:0px;"></div>
<svg class="b" style="left:1820px;top:672px;" width="40" height="38" viewBox="1820 672 40 38"><rect x="1827.3" y="678.9" width="23.2" height="18.2" rx="1.5" stroke="#1d232f" stroke-width="3.4" fill="none"/><path d="M1832.9 698.5h12.7l-6.4 6.6z" fill="#1d232f"/></svg>
<svg class="b" style="left:1820px;top:760px;" width="40" height="34" viewBox="1820 760 40 34"><path d="M1830.2 763.9l5.8 9.6h-11.6z" fill="#1d232f"/><circle cx="1830.2" cy="785" r="6" fill="#1d232f"/><rect x="1839.6" y="766.8" width="13.4" height="3.8" fill="#1d232f"/><rect x="1839.6" y="783.9" width="13.4" height="3.8" fill="#1d232f"/></svg>
<svg class="b" style="left:1820px;top:846px;" width="40" height="36" viewBox="1820 846 40 36"><circle cx="1839.1" cy="867.7" r="9.4" stroke="#1d232f" stroke-width="3.4" fill="none"/><rect x="1836.7" y="849.4" width="4.9" height="4.5" fill="#1d232f"/><path d="M1827.8 853.4l3.2 3.2-3.2 3.2-3.2-3.2zM1850.7 853.4l3.2 3.2-3.2 3.2-3.2-3.2z" fill="#1d232f"/><path d="M1838.6 868.2l4.9-5" stroke="#1d232f" stroke-width="3"/></svg>
<div class="b" style="left:1782px;top:907px;width:115.3px;height:2px;background:#dcdfe7;border-radius:0px;"></div>
<svg class="b" style="left:1820px;top:940px;" width="40" height="24" viewBox="1820 940 40 24"><path d="M1833.2 945.6l-7.3 6.5 7.3 6.5M1845 945.6l7.3 6.5-7.3 6.5M1841.7 944.4l-4.8 15.4" stroke="#1d232f" stroke-width="3.3" fill="none"/></svg>
<svg class="b" style="left:1820px;top:1024px;" width="40" height="30" viewBox="1820 1024 40 30"><circle cx="1839" cy="1043.8" r="14.5" stroke="#1d232f" stroke-width="4.3" fill="none"/><rect x="1836.8" y="1033.6" width="14" height="3.4" rx="1" fill="#1d232f"/></svg>
<div class="b" style="left:38px;top:1037px;width:1916px;height:34px;background:#f6f7f9;border-radius:0px;"></div>
<div class="b" style="left:0px;top:1071px;width:2002px;height:9px;background:#eaecf1;border-radius:0px;"></div>
<div class="b" style="left:1996px;top:0px;width:6px;height:1080px;background:#fff;border-radius:0px;"></div>
<div class="t" style="left:1690.68px;top:1050.43px;font-size:16.5px;line-height:16.5px;color:#9b9b9b;font-weight:400;letter-spacing:0.765px;">Powered by</div>
<svg class="b" style="left:1796px;top:1045px;" width="26" height="26" viewBox="1796 1045 26 26"><rect x="1798.3" y="1047.2" width="21.6" height="3.5" fill="#9b9b9b"/><path d="M1798.3 1052.3h21.6v3.6h-10.5v13.6h-3.7v-9.8a4 4 0 0 0-4-3.8h-3.4z" fill="#9b9b9b"/><circle cx="1816.2" cy="1065.8" r="3.4" fill="#9b9b9b"/></svg>
<div class="t" style="left:1829.84px;top:1050.29px;font-size:17.85px;line-height:17.85px;color:#9b9b9b;font-weight:400;letter-spacing:0.799px;">ThoughtSpot</div>
</body></html>
